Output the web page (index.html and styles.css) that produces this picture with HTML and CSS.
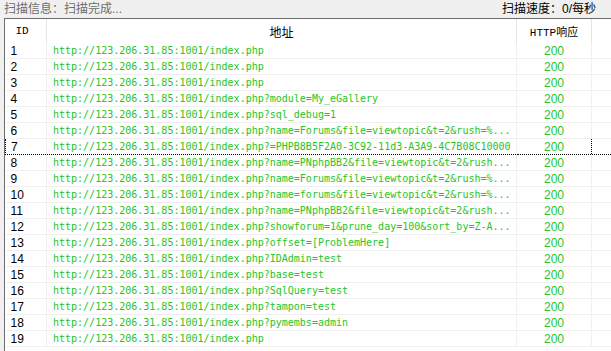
FILE: index.html
```html
<!DOCTYPE html>
<html lang="zh-CN">
<head>
  <meta charset="UTF-8">
  <title>扫描结果</title>
  <link rel="stylesheet" href="styles.css">
</head>
<body>
  <div class="status">
    <span class="info">扫描信息：扫描完成...</span>
    <span class="speed">扫描速度：0/每秒</span>
  </div>
  <div class="list">
    <table>
      <colgroup>
        <col class="c-id">
        <col class="c-url">
        <col class="c-code">
        <col>
      </colgroup>
      <thead>
        <tr>
          <th class="id">ID</th>
          <th class="url">地址</th>
          <th class="code">HTTP响应</th>
          <th class="rest"></th>
        </tr>
      </thead>
      <tbody>
        <tr><td class="id">1</td><td class="url">http://123.206.31.85:1001/index.php</td><td class="code">200</td><td></td></tr>
        <tr><td class="id">2</td><td class="url">http://123.206.31.85:1001/index.php</td><td class="code">200</td><td></td></tr>
        <tr><td class="id">3</td><td class="url">http://123.206.31.85:1001/index.php</td><td class="code">200</td><td></td></tr>
        <tr><td class="id">4</td><td class="url">http://123.206.31.85:1001/index.php?module=My_eGallery</td><td class="code">200</td><td></td></tr>
        <tr><td class="id">5</td><td class="url">http://123.206.31.85:1001/index.php?sql_debug=1</td><td class="code">200</td><td></td></tr>
        <tr><td class="id">6</td><td class="url">http://123.206.31.85:1001/index.php?name=Forums&amp;file=viewtopic&amp;t=2&amp;rush=%...</td><td class="code">200</td><td></td></tr>
        <tr class="focus"><td class="id">7</td><td class="url">http://123.206.31.85:1001/index.php?=PHPB8B5F2A0-3C92-11d3-A3A9-4C7B08C10000</td><td class="code">200</td><td></td></tr>
        <tr><td class="id">8</td><td class="url">http://123.206.31.85:1001/index.php?name=PNphpBB2&amp;file=viewtopic&amp;t=2&amp;rush...</td><td class="code">200</td><td></td></tr>
        <tr><td class="id">9</td><td class="url">http://123.206.31.85:1001/index.php?name=Forums&amp;file=viewtopic&amp;t=2&amp;rush=%...</td><td class="code">200</td><td></td></tr>
        <tr><td class="id">10</td><td class="url">http://123.206.31.85:1001/index.php?name=forums&amp;file=viewtopic&amp;t=2&amp;rush=%...</td><td class="code">200</td><td></td></tr>
        <tr><td class="id">11</td><td class="url">http://123.206.31.85:1001/index.php?name=PNphpBB2&amp;file=viewtopic&amp;t=2&amp;rush...</td><td class="code">200</td><td></td></tr>
        <tr><td class="id">12</td><td class="url">http://123.206.31.85:1001/index.php?showforum=1&amp;prune_day=100&amp;sort_by=Z-A...</td><td class="code">200</td><td></td></tr>
        <tr><td class="id">13</td><td class="url">http://123.206.31.85:1001/index.php?offset=[ProblemHere]</td><td class="code">200</td><td></td></tr>
        <tr><td class="id">14</td><td class="url">http://123.206.31.85:1001/index.php?IDAdmin=test</td><td class="code">200</td><td></td></tr>
        <tr><td class="id">15</td><td class="url">http://123.206.31.85:1001/index.php?base=test</td><td class="code">200</td><td></td></tr>
        <tr><td class="id">16</td><td class="url">http://123.206.31.85:1001/index.php?SqlQuery=test</td><td class="code">200</td><td></td></tr>
        <tr><td class="id">17</td><td class="url">http://123.206.31.85:1001/index.php?tampon=test</td><td class="code">200</td><td></td></tr>
        <tr><td class="id">18</td><td class="url">http://123.206.31.85:1001/index.php?pymembs=admin</td><td class="code">200</td><td></td></tr>
        <tr><td class="id">19</td><td class="url">http://123.206.31.85:1001/index.php</td><td class="code">200</td><td></td></tr>
      </tbody>
    </table>
  </div>
</body>
</html>
```

FILE: styles.css
```css
body {
  margin: 0;
  background: #f0f0f0;
  font-family: 'Liberation Sans', 'Noto Sans CJK SC', sans-serif;
  font-size: 12px;
  overflow: hidden;
}
.status {
  height: 18px;
  line-height: 18px;
  display: flex;
  justify-content: space-between;
  padding: 0 15px 0 4px;
}
.info {
  color: #6d6d6d;
}
.speed {
  color: #000;
}
.list {
  margin-left: 4px;
  border-top: 1px solid #6e6e6e;
  border-left: 1px solid #6e6e6e;
  background: #fff;
  height: 340px;
}
table {
  border-collapse: collapse;
  table-layout: fixed;
  width: 607px;
}
.c-id {
  width: 41px;
}
.c-url {
  width: 470px;
}
.c-code {
  width: 75px;
}
th {
  height: 24px;
  padding: 0;
  font-weight: normal;
  font-family: 'Liberation Mono', 'Noto Sans CJK SC', monospace;
  font-size: 11px;
  color: #000;
  border-right: 1px solid #e5e5e5;
}
th.id {
  text-align: left;
  padding-left: 10px;
}
th.url {
  text-align: center;
  font-family: 'Noto Sans CJK SC', sans-serif;
  font-size: 12px;
}
th.code {
  text-align: center;
}
th.rest {
  border-right: none;
}
td {
  height: 15px;
  padding: 0;
  border-bottom: 1px solid #f0f0f0;
  border-right: 1px solid #f0f0f0;
  white-space: nowrap;
  overflow: hidden;
}
td.id {
  padding-left: 5px;
  color: #000;
  font-size: 12px;
}
td.url {
  padding-left: 6px;
  font-family: 'DejaVu Sans Mono', monospace;
  font-size: 10px;
  color: #27c427;
}
td.code {
  text-align: center;
  color: #27c427;
  font-size: 12px;
}
tr.focus td {
  border-top: 1px dotted #000;
  border-bottom: 1px dotted #000;
}
tr.focus td.id {
  border-left: 1px dotted #000;
}
tr.focus td.code {
  border-right: 1px dotted #000;
}
```
